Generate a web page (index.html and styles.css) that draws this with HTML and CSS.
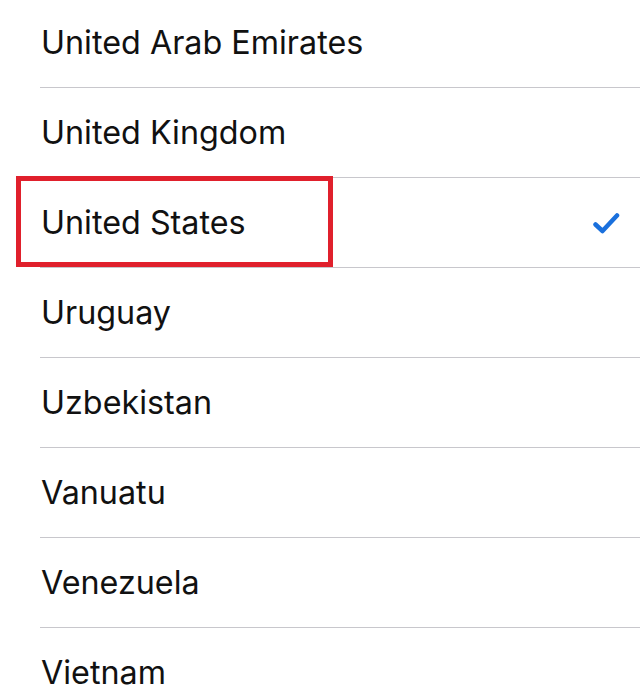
FILE: index.html
```html
<!DOCTYPE html>
<html>
<head>
<meta charset="utf-8">
<link rel="stylesheet" href="styles.css">
</head>
<body>
<ul class="list">
  <li class="row"><span class="label">United Arab Emirates</span></li>
  <li class="row"><span class="label">United Kingdom</span></li>
  <li class="row selected"><span class="label">United States</span>
    <svg class="check" width="28" height="22" viewBox="0 0 28 22"><path d="M3.5 12.5 L10.5 19 L25 3.5" fill="none" stroke="#1a70dd" stroke-width="4.5" stroke-linecap="round" stroke-linejoin="round"/></svg>
    <span class="highlight"></span>
  </li>
  <li class="row"><span class="label">Uruguay</span></li>
  <li class="row"><span class="label">Uzbekistan</span></li>
  <li class="row"><span class="label">Vanuatu</span></li>
  <li class="row"><span class="label">Venezuela</span></li>
  <li class="row"><span class="label">Vietnam</span></li>
</ul>
</body>
</html>
```
FILE: styles.css
```css
html, body {
  margin: 0;
  padding: 0;
  background: #ffffff;
}
body {
  width: 640px;
  height: 698px;
  overflow: hidden;
  font-family: Inter, "Noto Sans", sans-serif;
}
.list {
  list-style: none;
  margin: -2px 0 0 0;
  padding: 0 0 0 40px;
}
.row {
  position: relative;
  height: 89px;
  border-bottom: 1px solid #c8c7cc;
  display: flex;
  align-items: center;
  padding-left: 1px;
  padding-right: 20px;
}
.row:last-child {
  border-bottom: none;
}
.label {
  flex: 1;
  font-size: 32.3px;
  color: #111111;
}
.check {
  display: block;
}
.highlight {
  position: absolute;
  left: -24px;
  top: -2px;
  width: 307px;
  height: 81px;
  border: 5px solid #e0202c;
}
```
